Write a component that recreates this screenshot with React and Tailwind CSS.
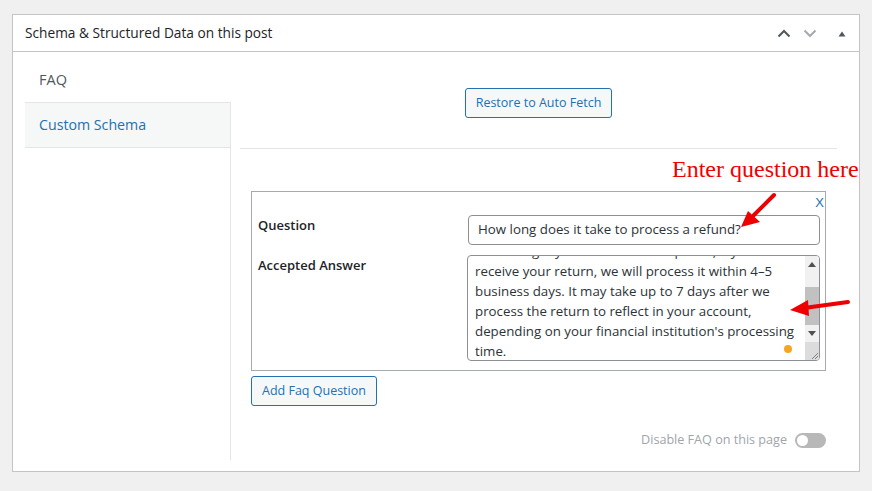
import React from "react";

const font = { fontFamily: '"Open Sans", "Noto Sans", sans-serif' };

function Chevron({ up, color }) {
  return (
    <svg width="14" height="9" viewBox="0 0 14 9" className="block">
      <path
        d={up ? "M1.5 7.5 L7 2 L12.5 7.5" : "M1.5 1.5 L7 7 L12.5 1.5"}
        fill="none"
        stroke={color}
        strokeWidth="2"
      />
    </svg>
  );
}

export default function App() {
  return (
    <div
      className="relative w-[872px] h-[491px] bg-[#f0f0f1] pt-[14px] pl-[12px] overflow-hidden"
      style={font}
    >
      <div className="w-[848px] h-[458px] border border-[#c3c4c7] bg-white flex flex-col">
        {/* header */}
        <div className="h-[37px] border-b border-[#c3c4c7] flex items-center pl-[12px] pr-[13px] pt-[1px] shrink-0">
          <div className="flex-1 text-[13.7px] text-[#1d2327]">Schema &amp; Structured Data on this post</div>
          <div className="flex items-center">
            <Chevron up color="#50575e" />
            <div className="w-[12px]" />
            <Chevron color="#a7aaad" />
            <div className="w-[21px]" />
            <svg width="8" height="6" viewBox="0 0 8 6" className="block">
              <path d="M0.5 5.5 L4 0.5 L7.5 5.5 Z" fill="#50575e" />
            </svg>
          </div>
        </div>
        {/* body */}
        <div className="flex flex-1 pl-[12px] pr-[21px] pt-[6px] pb-[11px]">
          <div className="w-[206px] flex flex-col shrink-0">
            <div className="h-[44px] flex items-center pl-[14px] text-[14.5px] text-[#50575e]">FAQ</div>
            <div className="h-[46px] flex items-center pl-[14px] text-[14.2px] text-[#2271b1] bg-[#f6f7f7] border-y border-r border-[#e5e5e5]">
              Custom Schema
            </div>
            <div className="flex-1 border-r border-[#e5e5e5]" />
          </div>
          <div className="w-[597px] ml-[9px] flex flex-col">
            <div className="h-[91px] flex items-center justify-center border-b border-[#e5e5e5]">
              <button className="h-[30px] px-[10px] rounded-[3px] border border-[#2271b1] bg-[#f6f7f7] text-[#2271b1] text-[12.5px]">
                Restore to Auto Fetch
              </button>
            </div>
            <div className="pt-[42px] px-[11px]">
              <div className="h-[180px] border border-[#a7aaad] flex flex-col">
                <div className="h-[20px] flex justify-end items-center pr-[1px]">
                  <span className="text-[13px] text-[#2271b1] leading-none" style={{ fontFamily: '"Liberation Sans", sans-serif' }}>X</span>
                </div>
                <div className="mt-[3px] flex items-start">
                  <div className="w-[216px] pl-[6px] text-[13px] font-semibold text-[#1d2327] leading-[20px]">Question</div>
                  <div className="w-[352px] h-[30px] border border-[#8c8f94] rounded-[4px] flex items-center pl-[9px] text-[13.3px] text-[#2c3338] whitespace-nowrap">
                    How long does it take to process a refund?
                  </div>
                </div>
                <div className="mt-[10px] flex items-start">
                  <div className="w-[215px] pl-[6px] text-[13px] font-semibold text-[#1d2327] leading-[20px]">Accepted Answer</div>
                  <div className="relative w-[353px] h-[106px] border border-[#8c8f94] rounded-[4px] overflow-hidden flex">
                    <div className="flex-1 overflow-hidden pl-[7px] text-[13.3px] leading-[20px] text-[#2c3338] whitespace-nowrap">
                      <div className="-mt-[15px]">
                        <div>Once we get your return and inspect it, if you</div>
                        <div>receive your return, we will process it within 4–5</div>
                        <div>business days. It may take up to 7 days after we</div>
                        <div>process the return to reflect in your account,</div>
                        <div>depending on your financial institution's processing</div>
                        <div>time.</div>
                      </div>
                    </div>
                    <div className="w-[14px] flex flex-col bg-[#f1f1f1] shrink-0">
                      <div className="h-[17px] flex items-center justify-center">
                        <svg width="8" height="5" viewBox="0 0 8 5"><path d="M0 5 L4 0 L8 5 Z" fill="#505050" /></svg>
                      </div>
                      <div className="h-[52px] flex flex-col justify-end">
                        <div className="h-[38px] bg-[#c1c1c1]" />
                      </div>
                      <div className="h-[17px] flex items-center justify-center">
                        <svg width="8" height="5" viewBox="0 0 8 5"><path d="M0 0 L4 5 L8 0 Z" fill="#505050" /></svg>
                      </div>
                      <div className="flex-1 bg-[#dcdcdc] flex items-end justify-end">
                        <svg width="10" height="10" viewBox="0 0 10 10">
                          <path d="M9 3 L3 9 M9 6 L6 9" stroke="#808080" strokeWidth="1" />
                        </svg>
                      </div>
                    </div>
                    <div className="absolute left-[316px] top-[89px] w-[8px] h-[8px] rounded-full bg-[#f5a623]" />
                  </div>
                </div>
              </div>
              <button className="mt-[5px] h-[30px] px-[10px] rounded-[3px] border border-[#2271b1] bg-[#f6f7f7] text-[#2271b1] text-[12.5px]">
                Add Faq Question
              </button>
              <div className="mt-[25px] flex justify-end items-center">
                <span className="text-[12.6px] text-[#a0a5aa]">Disable FAQ on this page</span>
                <div className="ml-[8px] w-[31px] h-[15px] rounded-full bg-[#b8b8b8] flex items-center pl-[2px]">
                  <div className="w-[11px] h-[11px] rounded-full bg-white" />
                </div>
              </div>
            </div>
          </div>
        </div>
      </div>

      {/* annotations */}
      <div
        className="absolute left-[672px] top-[157px] text-[24px] leading-[24px] text-[#f00000] whitespace-nowrap"
        style={{ fontFamily: '"Liberation Serif", serif' }}
      >
        Enter question here
      </div>
      <svg className="absolute left-0 top-0 pointer-events-none" width="872" height="491">
        <path d="M774 195 L754 215" stroke="#ee0000" strokeWidth="4" strokeLinecap="round" />
        <path d="M741 227 L748 211 L760 222 Z" fill="#ee0000" />
        <path d="M848 302 L804 308" stroke="#ee0000" strokeWidth="4" strokeLinecap="round" />
        <path d="M790 310 L808 300 L809 316 Z" fill="#ee0000" />
      </svg>
    </div>
  );
}
